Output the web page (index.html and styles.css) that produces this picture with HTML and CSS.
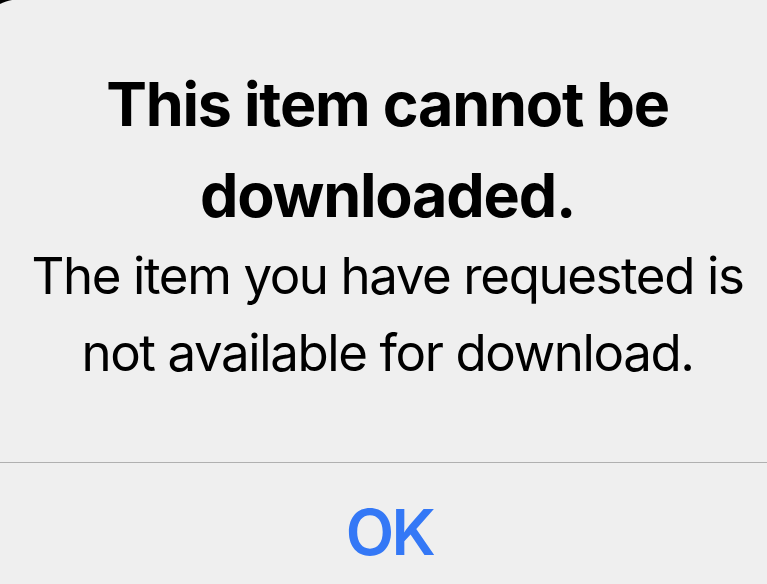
FILE: index.html
```html
<!DOCTYPE html>
<html>
<head>
<meta charset="utf-8">
<link rel="stylesheet" href="styles.css">
</head>
<body>
<div class="alert">
  <div class="content">
    <h1 class="title">This item cannot be downloaded.</h1>
    <p class="message">The item you have requested is not available for download.</p>
  </div>
  <div class="actions">
    <button class="btn">OK</button>
  </div>
</div>
</body>
</html>
```
FILE: styles.css
```css
html, body {
  margin: 0;
  padding: 0;
  background: #efefef;
}
body {
  width: 767px;
  height: 584px;
  overflow: hidden;
  font-family: Inter, "Noto Sans", sans-serif;
  color: #000;
}
.alert {
  position: relative;
  display: flex;
  flex-direction: column;
  height: 584px;
}
.alert::before {
  content: "";
  position: absolute;
  top: 0;
  left: 0;
  width: 14px;
  height: 6px;
  background: radial-gradient(circle at 20px 44px, transparent 44.2px, #000 45.2px);
}
.content {
  height: 463px;
  box-sizing: border-box;
  padding: 59px 10px 0 18px;
  text-align: center;
  border-bottom: 1px solid #b0b0b0;
}
.title {
  margin: 0 auto;
  width: 600px;
  font-size: 61px;
  line-height: 91px;
  font-weight: 700;
  letter-spacing: -1.2px;
}
.message {
  margin: -4px 0 0;
  font-size: 51px;
  line-height: 77px;
  font-weight: 400;
  letter-spacing: -1.4px;
}
.actions {
  flex: 1;
  display: flex;
  align-items: flex-start;
  justify-content: center;
  padding: 38px 0 0 12px;
}
.btn {
  background: none;
  border: 0;
  padding: 0;
  font-family: Inter, "Noto Sans", sans-serif;
  font-size: 63px;
  line-height: 1;
  font-weight: 600;
  letter-spacing: -2.5px;
  color: #3478f6;
}
```
